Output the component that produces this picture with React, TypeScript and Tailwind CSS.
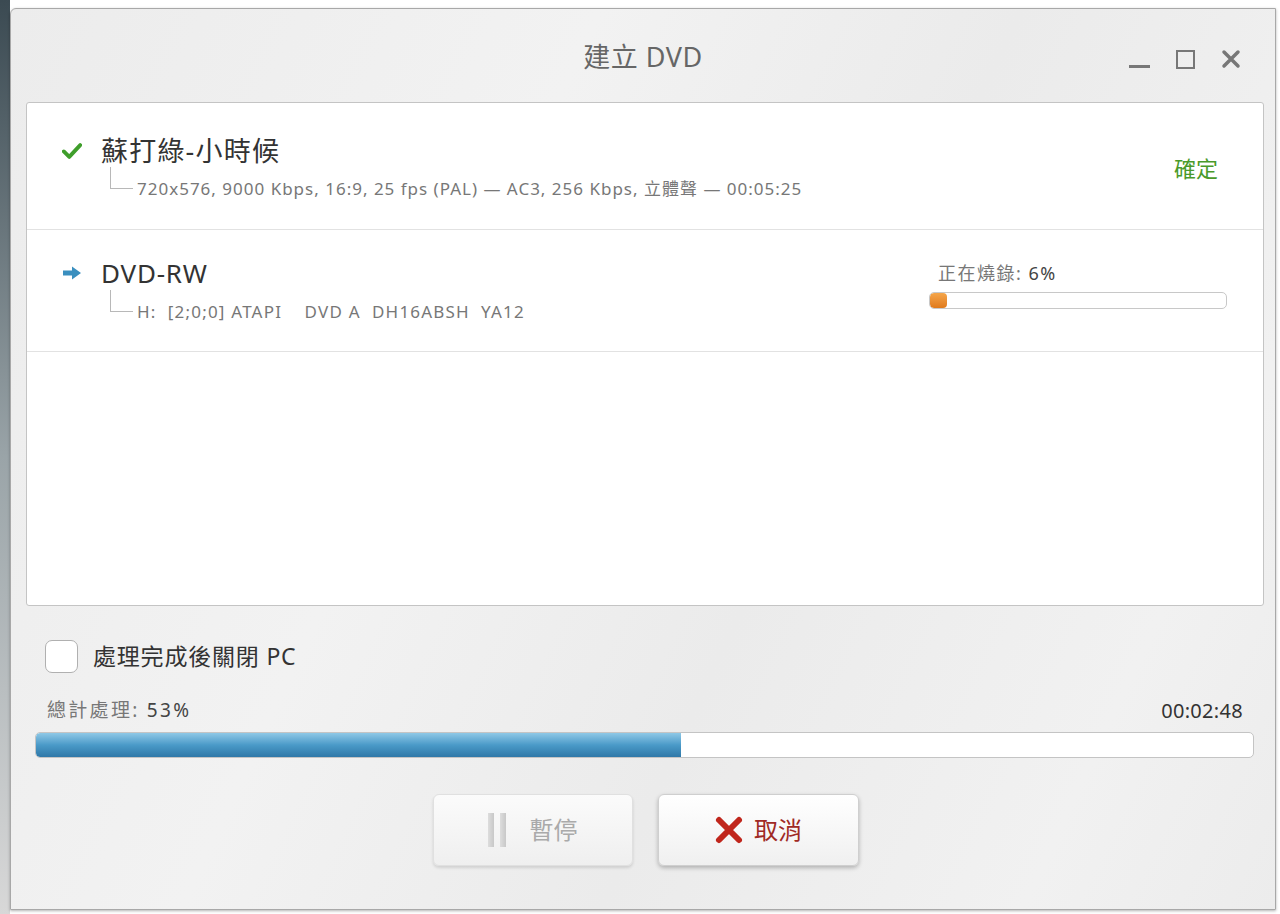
import React from "react";

const FONT = { fontFamily: '"Noto Sans", "Noto Sans CJK TC", sans-serif' };

const CheckIcon = () => (
  <svg width="22" height="20" viewBox="0 0 22 20">
    <path d="M2 10.5 L8 16.5 L20 3.5" fill="none" stroke="#3f9e2b" strokeWidth="4.2" strokeLinecap="round" strokeLinejoin="round" />
  </svg>
);

const ArrowIcon = () => (
  <svg width="20" height="16" viewBox="0 0 20 16">
    <path d="M1 5.5 H10 V1.5 L19 8 L10 14.5 V10.5 H1 Z" fill="#3a8fbf" />
  </svg>
);

const Connector = () => (
  <div className="mt-[-10px] mr-[4px] h-[22px] w-[23px] shrink-0 self-start border-b border-l border-[#b8b8b8]" />
);

const App = () => {
  return (
    <div className="h-[914px] w-[1280px] bg-white" style={FONT}>
      <div className="flex h-full">
        <div className="w-[10px] bg-gradient-to-b from-[#3b4a52] via-[#9aa4a8] to-[#d8d8d8]" />
        <div className="mt-[8px] flex h-[902px] w-[1266px] flex-col rounded-tl-[6px] border border-[#a8a8a8] bg-[linear-gradient(115deg,#ececec_0%,#f2f2f2_35%,#ebebeb_60%,#f1f1f1_85%,#ececec_100%)] shadow-[0_1px_3px_rgba(0,0,0,0.3)]">
          {/* title bar */}
          <div className="relative flex h-[93px] items-center justify-center">
            <div className="mt-[4px] text-[27px] tracking-[0.5px] text-[#666]">建立 DVD</div>
            <div className="absolute right-[34px] top-[40px] flex items-center gap-[26px]">
              <div className="mt-[14px] h-[3px] w-[21px] bg-[#777]" />
              <div className="h-[19px] w-[19px] border-[2.5px] border-[#777]" />
              <svg width="20" height="20" viewBox="0 0 20 20">
                <path d="M3 3 L17 17 M17 3 L3 17" stroke="#777" strokeWidth="3.5" strokeLinecap="round" />
              </svg>
            </div>
          </div>

          {/* job list */}
          <div className="ml-[15px] mr-[11px] h-[504px] rounded-[3px] border border-[#c4c4c4] bg-white">
            <div className="flex h-[127px] border-b border-[#e2e2e2] pl-[35px] pr-[45px] pt-[30px]">
              <div className="flex-1">
                <div className="flex h-[36px] items-center">
                  <div className="flex w-[20px] justify-center">
                    <CheckIcon />
                  </div>
                  <div className="ml-[19px] text-[27px] tracking-[1.2px] text-[#333]">蘇打綠-小時候</div>
                </div>
                <div className="mt-[8px] flex h-[24px] items-center pl-[48px] text-[17px] tracking-[1px] text-[#777]">
                  <Connector />
                  <span>720x576, 9000 Kbps, 16:9, 25 fps (PAL) — AC3, 256 Kbps, 立體聲 — 00:05:25</span>
                </div>
              </div>
              <div className="mt-[20px] h-[30px] text-[22px] leading-[30px] text-[#4a9a2a]">確定</div>
            </div>

            <div className="flex h-[122px] border-b border-[#e2e2e2] pl-[35px] pr-[36px] pt-[25px]">
              <div className="flex-1">
                <div className="flex h-[36px] items-center">
                  <div className="flex w-[20px] justify-center">
                    <ArrowIcon />
                  </div>
                  <div className="ml-[19px] text-[26px] tracking-[0.8px] text-[#333]">DVD-RW</div>
                </div>
                <div className="mt-[9px] flex h-[24px] items-center pl-[48px] text-[17px] tracking-[1.2px] text-[#777]">
                  <Connector />
                  <span className="whitespace-pre">H:  [2;0;0] ATAPI    DVD A  DH16ABSH  YA12</span>
                </div>
              </div>
              <div className="w-[298px] pt-[6px]">
                <div className="h-[24px] pl-[9px] text-[18px] leading-[24px] tracking-[1.5px] text-[#777]">
                  正在燒錄: <span className="text-[#444]">6%</span>
                </div>
                <div className="mt-[7px] h-[17px] overflow-hidden rounded-[5px] border border-[#c8c8c8] bg-white">
                  <div className="h-full w-[17px] rounded-[4px] bg-gradient-to-b from-[#f5a64a] to-[#e07a1a]" />
                </div>
              </div>
            </div>
          </div>

          {/* options */}
          <div className="ml-[34px] mt-[33px] flex items-center">
            <div className="h-[33px] w-[33px] rounded-[7px] border border-[#b0b0b0] bg-white" />
            <div className="ml-[15px] text-[23px] tracking-[0.8px] text-[#333]">處理完成後關閉 PC</div>
          </div>

          <div className="ml-[36px] mr-[32px] mt-[25px] flex h-[24px] items-center justify-between">
            <div className="text-[19px] tracking-[2.3px] text-[#777]">
              總計處理: <span className="text-[#444]">53%</span>
            </div>
            <div className="text-[20px] tracking-[0.3px] text-[#333]">00:02:48</div>
          </div>

          <div className="ml-[24px] mr-[21px] mt-[9px] h-[26px] overflow-hidden rounded-[5px] border border-[#c4c4c4] bg-white">
            <div className="h-full w-[53%] rounded-l-[4px] bg-gradient-to-b from-[#8ec8e6] via-[#4a9ac8] to-[#2f78a8]" />
          </div>

          {/* buttons */}
          <div className="mt-[36px] flex justify-center gap-[25px] pl-[5px]">
            <button className="flex h-[72px] w-[200px] items-center justify-center gap-[24px] rounded-[6px] border border-[#e0e0e0] bg-gradient-to-b from-[#fbfbfb] to-[#efefef] text-[24px] text-[#aaa] shadow-[0_2px_3px_rgba(0,0,0,0.12)]">
              <span className="flex gap-[6px]">
                <span className="h-[34px] w-[6px] bg-gradient-to-r from-[#ddd] to-[#c8c8c8]" />
                <span className="h-[34px] w-[6px] bg-gradient-to-r from-[#ddd] to-[#c8c8c8]" />
              </span>
              暫停
            </button>
            <button className="flex h-[72px] w-[201px] items-center justify-center gap-[10px] rounded-[6px] border border-[#cfcfcf] bg-gradient-to-b from-[#ffffff] to-[#f0f0f0] text-[24px] text-[#a02a24] shadow-[0_2px_4px_rgba(0,0,0,0.25)]">
              <svg width="30" height="30" viewBox="0 0 30 30">
                <path d="M5 5 L25 25 M25 5 L5 25" stroke="#c0261c" strokeWidth="6" strokeLinecap="round" />
              </svg>
              取消
            </button>
          </div>
        </div>
      </div>
    </div>
  );
};

export default App;
